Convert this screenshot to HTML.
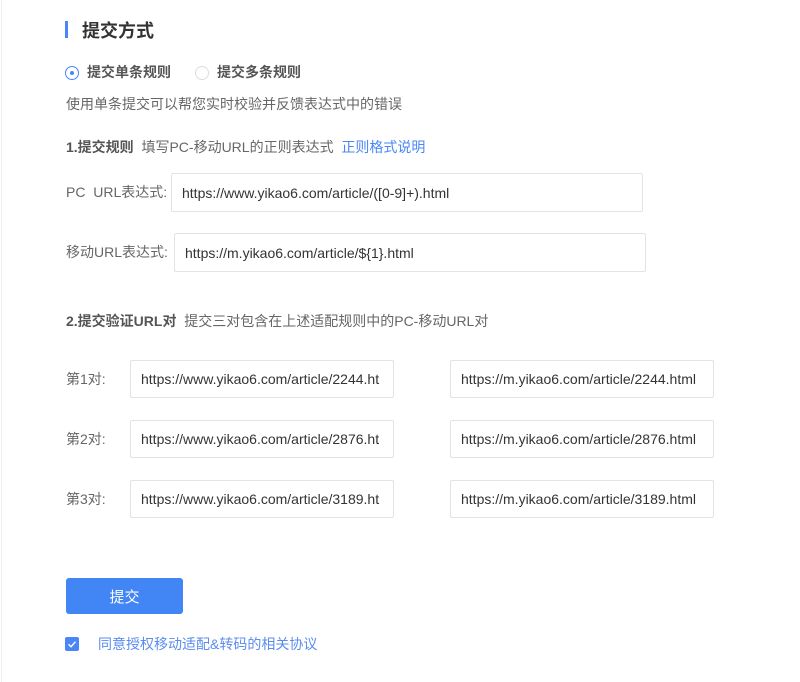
<!DOCTYPE html>
<html><head><meta charset="utf-8"><style>
*{margin:0;padding:0;box-sizing:border-box}
body{width:800px;height:682px;background:#fff;position:relative;overflow:hidden;font-family:"Liberation Sans","Noto Sans CJK SC",sans-serif;color:#666;font-size:14px}
.a{position:absolute;white-space:nowrap}
.inp{position:absolute;border:1px solid #e3e3e3;border-radius:2px;color:#333;font-size:14px;padding-left:10px;display:flex;align-items:center;overflow:hidden}
.lbl{position:absolute;font-size:14px;color:#666;line-height:16px}
</style></head><body>
<div class="a" style="left:1px;top:0;width:1px;height:682px;background:#eee"></div>
<div class="a" style="left:65px;top:21px;width:3px;height:17px;background:#4a86f7"></div>
<div class="a" style="left:82px;top:20px;font-size:18px;font-weight:bold;color:#333;line-height:22px">提交方式</div>
<div class="a" style="left:65px;top:66px;width:14px;height:14px;border:1px solid #4a86f7;border-radius:50%"></div>
<div class="a" style="left:70px;top:71px;width:4px;height:4px;background:#4a86f7;border-radius:50%"></div>
<div class="a" style="left:87px;top:64px;font-weight:bold;color:#555;line-height:16px">提交单条规则</div>
<div class="a" style="left:195px;top:66px;width:14px;height:14px;border:1px solid #ddd;border-radius:50%"></div>
<div class="a" style="left:217px;top:64px;font-weight:bold;color:#555;line-height:16px">提交多条规则</div>
<div class="a" style="left:66px;top:96px;line-height:16px">使用单条提交可以帮您实时校验并反馈表达式中的错误</div>
<div class="a" style="left:66px;top:139px;line-height:16px"><b style="color:#555">1.提交规则</b>&nbsp;&nbsp;填写PC-移动URL的正则表达式&nbsp;&nbsp;<span style="color:#4a86f7">正则格式说明</span></div>
<div class="lbl" style="left:66px;top:184px">PC&nbsp;&nbsp;URL表达式:</div>
<div class="inp" style="left:171px;top:173px;width:472px;height:39px">https://www.yikao6.com/article/([0-9]+).html</div>
<div class="lbl" style="left:66px;top:244px">移动URL表达式:</div>
<div class="inp" style="left:174px;top:233px;width:472px;height:39px">https://m.yikao6.com/article/${1}.html</div>
<div class="a" style="left:66px;top:313px;line-height:16px"><b style="color:#555">2.提交验证URL对</b>&nbsp;&nbsp;提交三对包含在上述适配规则中的PC-移动URL对</div>
<div class="lbl" style="left:66px;top:371px">第1对:</div>
<div class="inp" style="left:130px;top:360px;width:264px;height:38px">https://www.yikao6.com/article/2244.ht</div>
<div class="inp" style="left:450px;top:360px;width:264px;height:38px">https://m.yikao6.com/article/2244.html</div>
<div class="lbl" style="left:66px;top:431px">第2对:</div>
<div class="inp" style="left:130px;top:420px;width:264px;height:38px">https://www.yikao6.com/article/2876.ht</div>
<div class="inp" style="left:450px;top:420px;width:264px;height:38px">https://m.yikao6.com/article/2876.html</div>
<div class="lbl" style="left:66px;top:491px">第3对:</div>
<div class="inp" style="left:130px;top:480px;width:264px;height:38px">https://www.yikao6.com/article/3189.ht</div>
<div class="inp" style="left:450px;top:480px;width:264px;height:38px">https://m.yikao6.com/article/3189.html</div>
<div class="a" style="left:66px;top:578px;width:117px;height:36px;background:#4285f4;border-radius:3px;color:#fff;font-size:15px;display:flex;align-items:center;justify-content:center">提交</div>
<div class="a" style="left:65px;top:637px;width:14px;height:14px;background:#4a86f7;border-radius:2px"></div>
<svg class="a" style="left:65px;top:637px" width="14" height="14"><path d="M3.5 7.2l2.5 2.5 4.5-5" stroke="#fff" stroke-width="1.4" fill="none"/></svg>
<div class="a" style="left:98px;top:636px;color:#5b8cf0;font-size:14px;line-height:16px">同意授权移动适配&amp;转码的相关协议</div>
</body></html>
